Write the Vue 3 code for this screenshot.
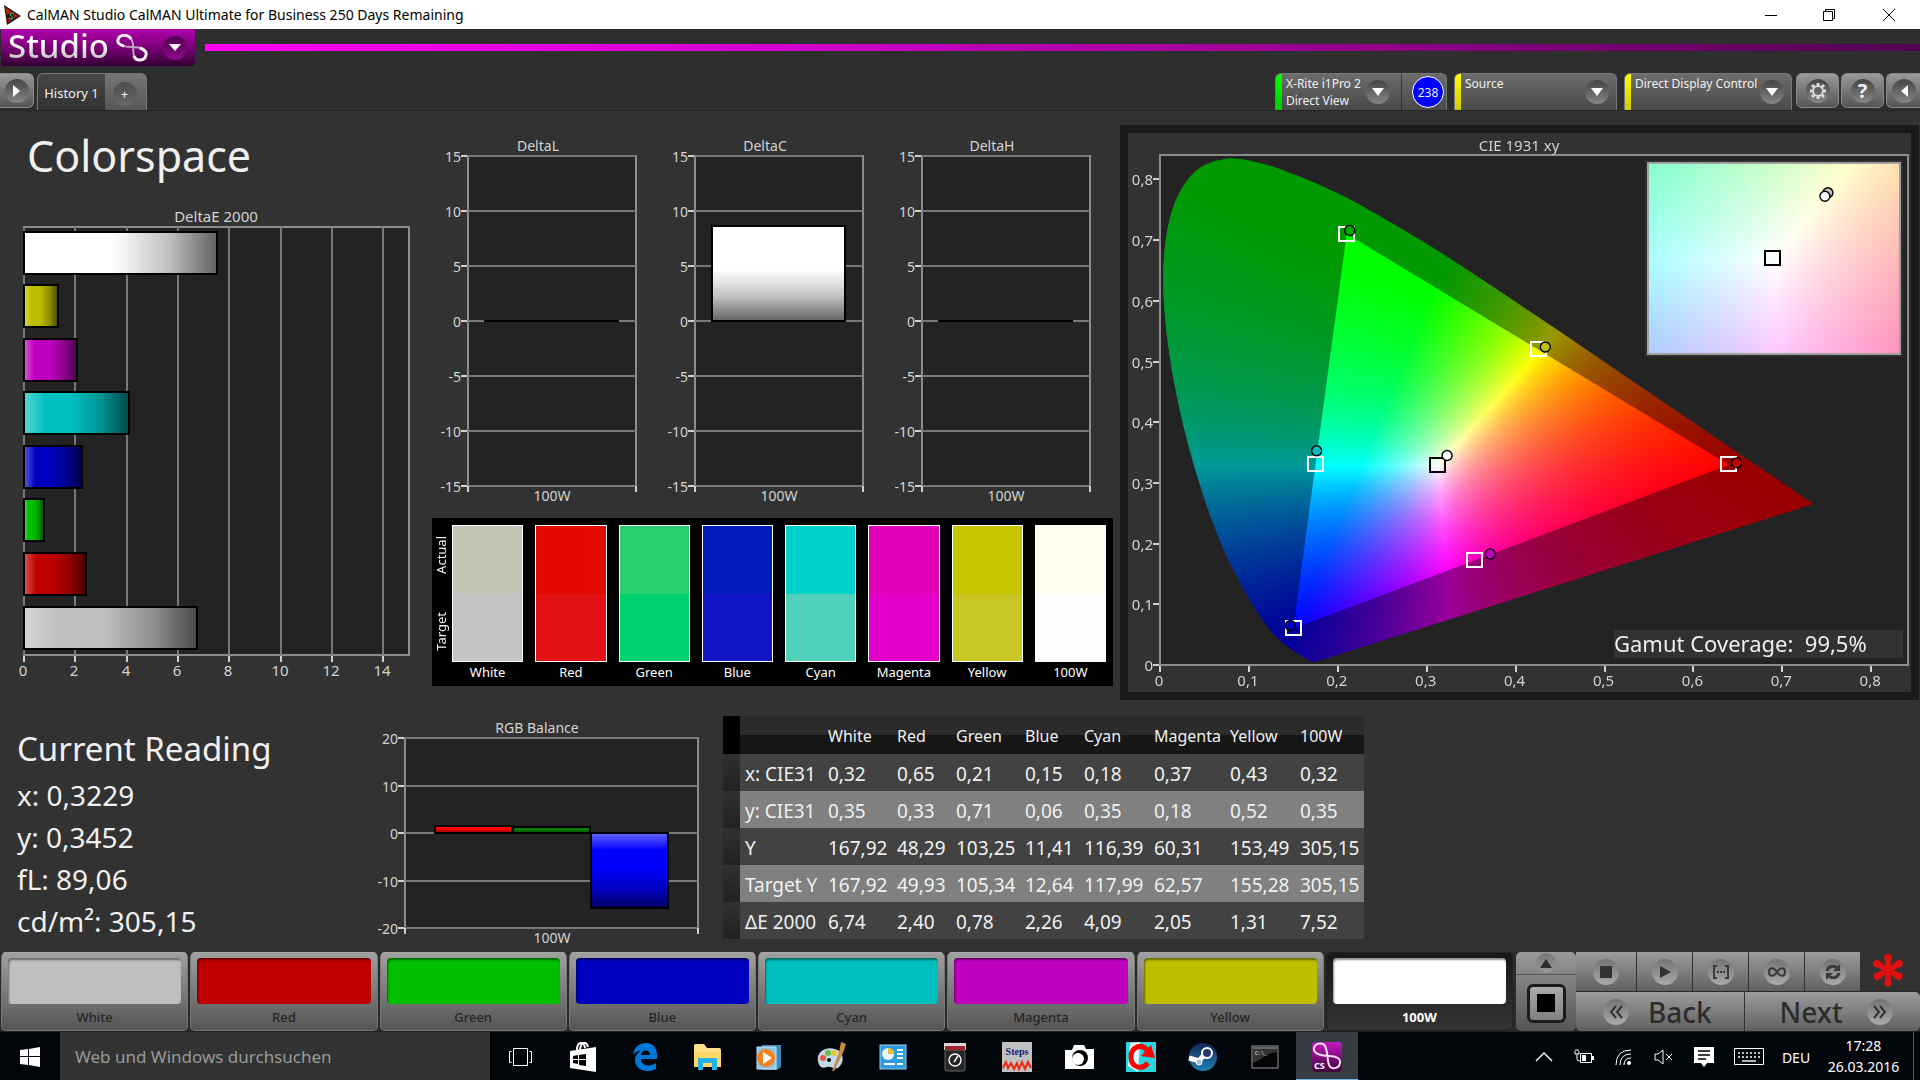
<script setup>
import { ref, onMounted } from 'vue'

/* ---------- measurement data ---------- */
const colors = [
  { name: 'White', css: '#bfbfbf', actual: '#c4c4b6', target: '#c4c4c4', de: 6.74 },
  { name: 'Red', css: '#bf0000', actual: '#e30b00', target: '#e31315', de: 2.4 },
  { name: 'Green', css: '#00bf00', actual: '#29d06d', target: '#00d26f', de: 0.78 },
  { name: 'Blue', css: '#0000bf', actual: '#001cbc', target: '#1313c8', de: 2.26 },
  { name: 'Cyan', css: '#00bfbf', actual: '#00d2cb', target: '#4fd1bb', de: 4.09 },
  { name: 'Magenta', css: '#bf00bf', actual: '#e300b9', target: '#e300c8', de: 2.05 },
  { name: 'Yellow', css: '#bfbf00', actual: '#c8c600', target: '#c8c624', de: 1.31 },
  { name: '100W', css: '#ffffff', actual: '#fffdee', target: '#fdfdfd', de: 7.52 }
]
const deltaEBars = [...colors].reverse()
const deltaETicks = [0, 2, 4, 6, 8, 10, 12, 14]
const deltaEX = (v) => Math.round(24 + (v * 385) / 15)
const deltaEY = (i) => Math.floor(31 + (i * 375) / 7)

const deltaCharts = [
  { title: 'DeltaL', value: 0 },
  { title: 'DeltaC', value: 8.6 },
  { title: 'DeltaH', value: 0 }
]
const deltaTicks = [15, 10, 5, 0, -5, -10, -15]
const deltaY = (v) => Math.round(191 - v * 11)

const balance = [
  { name: 'Red', value: 1.5, css: '#ff0000' },
  { name: 'Green', value: 1.3, css: '#008000' },
  { name: 'Blue', value: -15.7, css: '#0000ff' }
]
const balanceTicks = [20, 10, 0, -10, -20]
const balanceY = (v) => Math.round(121 - (v * 95) / 20)

const readings = ['x: 0,3229', 'y: 0,3452', 'fL: 89,06', 'cd/m²: 305,15']

const rows = [
  ['x: CIE31', '0,32', '0,65', '0,21', '0,15', '0,18', '0,37', '0,43', '0,32'],
  ['y: CIE31', '0,35', '0,33', '0,71', '0,06', '0,35', '0,18', '0,52', '0,35'],
  ['Y', '167,92', '48,29', '103,25', '11,41', '116,39', '60,31', '153,49', '305,15'],
  ['Target Y', '167,92', '49,93', '105,34', '12,64', '117,99', '62,57', '155,28', '305,15'],
  ['ΔE 2000', '6,74', '2,40', '0,78', '2,26', '4,09', '2,05', '1,31', '7,52']
]
const colWidths = [17, 83, 69, 59, 69, 59, 70, 76, 70, 69]

/* ---------- chromaticity chart ---------- */
const CIE_W = 783
const CIE_H = 559
const px = (x) => 32 + x * 889
const py = (y) => 532 - y * 607
const white = { x: 0.3127, y: 0.329 }
const inset = { x: 520, y: 30, w: 252, h: 191, span: 0.05 }
const ix = (x) => inset.x + inset.w / 2 + ((x - white.x) / inset.span) * inset.w
const iy = (y) => inset.y + inset.h / 2 - ((y - white.y) / inset.span) * inset.h
const cieTicks = [0, 0.1, 0.2, 0.3, 0.4, 0.5, 0.6, 0.7, 0.8]
const comma = (v) => String(v).replace('.', ',')

const targets = [
  { x: 0.21, y: 0.71 }, { x: 0.4263, y: 0.5205 }, { x: 0.1752, y: 0.331 },
  { x: 0.64, y: 0.331 }, { x: 0.354, y: 0.173 }, { x: 0.1505, y: 0.0605 }
]
const measured = [
  { x: 0.2135, y: 0.716, css: '#00a500' }, { x: 0.4334, y: 0.524, css: '#bfbf00' },
  { x: 0.1762, y: 0.353, css: '#00bfbf' }, { x: 0.6487, y: 0.333, css: '#bf0000' },
  { x: 0.3715, y: 0.183, css: '#bf00bf' }, { x: 0.1466, y: 0.065, css: '#0000bf' },
  { x: 0.3229, y: 0.3452, css: '#ffffff' }
]
const locus = [
  [0.1741, 0.005], [0.1714, 0.0051], [0.1644, 0.0109], [0.1566, 0.0177], [0.144, 0.0297],
  [0.1355, 0.0399], [0.1241, 0.0578], [0.1096, 0.0868], [0.0913, 0.1327], [0.0687, 0.2007],
  [0.0454, 0.295], [0.0235, 0.4127], [0.0082, 0.5384], [0.0039, 0.6548], [0.0139, 0.7502],
  [0.0389, 0.812], [0.0743, 0.8338], [0.1142, 0.8262], [0.1547, 0.8059], [0.1929, 0.7816],
  [0.2296, 0.7543], [0.3016, 0.6923], [0.3731, 0.6245], [0.4441, 0.5547], [0.5125, 0.4866],
  [0.5752, 0.4242], [0.627, 0.3725], [0.6658, 0.334], [0.6915, 0.3083], [0.719, 0.2809],
  [0.7347, 0.2653]
]
const gamut = [[0.21, 0.71], [0.64, 0.33], [0.15, 0.06]]
const cieCanvas = ref(null)

function toRgb(x, y) {
  const yy = Math.max(y, 0.0001)
  const X = x / yy
  const Z = (1 - x - yy) / yy
  const r = Math.max(0, 3.2406 * X - 1.5372 - 0.4986 * Z)
  const g = Math.max(0, -0.9689 * X + 1.8758 + 0.0415 * Z)
  const b = Math.max(0, 0.0557 * X - 0.204 + 1.057 * Z)
  const m = Math.max(r, g, b, 0.0001)
  return [(r / m) * 255, (g / m) * 255, (b / m) * 255]
}

function colourField(w, h, xAt, yAt) {
  const field = document.createElement('canvas')
  field.width = w
  field.height = h
  const ctx = field.getContext('2d')
  const img = ctx.createImageData(w, h)
  for (let j = 0; j < h; j++) {
    for (let i = 0; i < w; i++) {
      const c = toRgb(xAt(i), yAt(j))
      const o = (j * w + i) * 4
      img.data[o] = c[0]
      img.data[o + 1] = c[1]
      img.data[o + 2] = c[2]
      img.data[o + 3] = 255
    }
  }
  ctx.putImageData(img, 0, 0)
  return field
}

function locusPath(ctx) {
  const p = locus.map(([x, y]) => [px(x), py(y)])
  ctx.beginPath()
  ctx.moveTo(p[0][0], p[0][1])
  for (let i = 0; i < p.length - 1; i++) {
    const a = p[Math.max(0, i - 1)]
    const b = p[i]
    const c = p[i + 1]
    const d = p[Math.min(p.length - 1, i + 2)]
    ctx.bezierCurveTo(
      b[0] + (c[0] - a[0]) / 6, b[1] + (c[1] - a[1]) / 6,
      c[0] - (d[0] - b[0]) / 6, c[1] - (d[1] - b[1]) / 6, c[0], c[1]
    )
  }
  ctx.closePath()
}

onMounted(() => {
  const ctx = cieCanvas.value.getContext('2d')
  const field = colourField(CIE_W, CIE_H, (i) => (i - 32) / 889, (j) => (532 - j) / 607)
  ctx.save()
  locusPath(ctx)
  ctx.clip()
  ctx.drawImage(field, 0, 0)
  ctx.fillStyle = 'rgba(0,0,0,0.4)'
  ctx.fillRect(0, 0, CIE_W, CIE_H)
  ctx.restore()
  ctx.save()
  ctx.beginPath()
  gamut.forEach(([x, y], i) => (i ? ctx.lineTo(px(x), py(y)) : ctx.moveTo(px(x), py(y))))
  ctx.closePath()
  ctx.clip()
  ctx.drawImage(field, 0, 0)
  ctx.restore()
  const zoomed = colourField(
    inset.w, inset.h,
    (i) => white.x + (i / inset.w - 0.5) * inset.span,
    (j) => white.y + (0.5 - j / inset.h) * inset.span
  )
  ctx.drawImage(zoomed, inset.x, inset.y)
})
</script>

<template>
  <div class="desktop">
    <header class="titlebar">
      <svg width="17" height="20" viewBox="0 0 17 20" aria-hidden="true">
        <path d="M0 0L17 11L3 20Z" fill="#2a0d0a" /><path d="M1 2L8 7L3 10Z" fill="#b3261a" /><path d="M9 8L15 11L10 13Z" fill="#a3301f" />
        <path d="M3 12L8 15L4 18Z" fill="#8f1414" /><path d="M10 8Q5 8 6 10Q9 12 9 13Q7 15 5 13" stroke="#43d16a" fill="none" />
      </svg>
      <span class="title">CalMAN Studio CalMAN Ultimate for Business 250 Days Remaining</span>
      <button class="win" aria-label="Minimize"><svg width="12" height="12"><path d="M0 6.5H12" stroke="#000" /></svg></button>
      <button class="win" aria-label="Restore"><svg width="12" height="12" fill="none" stroke="#000"><path d="M.5 2.5H9.5V11.5H.5ZM2.5 2.5V.5H11.5V9.5H9.5" /></svg></button>
      <button class="win" aria-label="Close"><svg width="12" height="12"><path d="M0 0L12 12M12 0L0 12" stroke="#000" /></svg></button>
    </header>

    <div class="brandbar">
      <button class="brand" aria-label="Studio menu">
        <span class="brand-name">Studio</span>
        <svg width="32" height="28" viewBox="0 0 32 28" fill="none" aria-hidden="true">
          <path d="M15 5C12 0 3 0 2 6C1 11 8 13 16 13C24 13 31 15 30 21C29 27 20 28 18 22C16 17 19 10 15 5Z" stroke="#c9a3c9" stroke-width="2" />
          <path d="M15 5C12 0 3 0 2 6C1 9 4 11 8 12M24 14C29 16 31 18 30 21C29 27 20 28 18 22" stroke="#f4eef4" stroke-width="3" />
        </svg>
        <span class="knob purple"><svg width="12" height="7"><path d="M0 0H12L6 7Z" fill="#fff" /></svg></span>
      </button>
      <div class="beam"></div>
    </div>

    <div class="toolbar">
      <button class="sq first" aria-label="Expand"><span class="knob"><svg width="8" height="12"><path d="M0 0L7 6L0 12Z" fill="#fff" /></svg></span></button>
      <nav class="tabs">
        <button class="tab on">History 1</button>
        <button class="tab add" aria-label="Add history"><span class="plus">+</span></button>
      </nav>
      <div class="spacer"></div>
      <div class="device meter">
        <i class="strip green"></i>
        <button class="device-btn"><span>X-Rite i1Pro 2<br />Direct View</span><span class="knob"><svg width="12" height="8"><path d="M0 0H12L6 8Z" fill="#fff" /></svg></span></button>
        <button class="badge">238</button>
      </div>
      <div class="device source">
        <i class="strip"></i>
        <button class="device-btn"><span>Source</span><span class="knob"><svg width="12" height="8"><path d="M0 0H12L6 8Z" fill="#fff" /></svg></span></button>
      </div>
      <div class="device display">
        <i class="strip"></i>
        <button class="device-btn"><span>Direct Display Control</span><span class="knob"><svg width="12" height="8"><path d="M0 0H12L6 8Z" fill="#fff" /></svg></span></button>
      </div>
      <button class="sq" aria-label="Settings"><span class="knob"><svg width="18" height="18" viewBox="-9 -9 18 18" fill="none" stroke="#ddd"><circle r="5" stroke-width="2" /><path d="M0-6V-8M0 6V8M6 0H8M-6 0H-8M4-4L6-6M-4 4L-6 6M4 4L6 6M-4-4L-6-6" stroke-width="3" /></svg></span></button>
      <button class="sq" aria-label="Help"><span class="knob help">?</span></button>
      <button class="sq last" aria-label="Collapse"><span class="knob"><svg width="8" height="12"><path d="M8 0L1 6L8 12Z" fill="#fff" /></svg></span></button>
    </div>

    <main class="workspace">
      <section class="upper">
        <div class="col-a">
          <h1>Colorspace</h1>
          <svg class="chart wide" viewBox="0 0 430 480" role="img" aria-label="DeltaE 2000">
            <defs>
              <linearGradient id="shadeX"><stop offset="0" stop-color="#fff" stop-opacity=".35" /><stop offset=".2" stop-color="#fff" stop-opacity="0" /><stop offset=".46" stop-color="#000" stop-opacity="0" /><stop offset=".75" stop-color="#000" stop-opacity=".25" /><stop offset="1" stop-color="#000" stop-opacity=".62" /></linearGradient>
              <linearGradient id="shadeY" x2="0" y2="1"><stop offset="0" stop-color="#fff" stop-opacity=".4" /><stop offset=".23" stop-color="#fff" stop-opacity="0" /><stop offset=".46" stop-color="#000" stop-opacity="0" /><stop offset=".75" stop-color="#000" stop-opacity=".25" /><stop offset="1" stop-color="#000" stop-opacity=".62" /></linearGradient>
            </defs>
            <text x="216" y="21" text-anchor="middle">DeltaE 2000</text>
            <rect class="plot" x="24" y="26" width="385" height="428" />
            <g v-for="t in deltaETicks" :key="t">
              <line class="grid" :x1="deltaEX(t)" y1="26" :x2="deltaEX(t)" y2="454" />
              <line class="tick" :x1="deltaEX(t)" y1="455" :x2="deltaEX(t)" y2="461" />
              <text :x="deltaEX(t) - 1" y="475" text-anchor="middle">{{ t }}</text>
            </g>
            <g v-for="(b, i) in deltaEBars" :key="b.name" class="bar">
              <rect x="24" :y="deltaEY(i)" :width="deltaEX(b.de) - 24" height="42" :fill="b.css" />
              <rect x="24" :y="deltaEY(i)" :width="deltaEX(b.de) - 24" height="42" fill="url(#shadeX)" />
            </g>
          </svg>
        </div>

        <div class="col-b">
          <div class="deltas">
            <svg v-for="c in deltaCharts" :key="c.title" class="chart" viewBox="0 0 227 380" role="img" :aria-label="c.title">
              <text x="106" y="21" text-anchor="middle">{{ c.title }}</text>
              <rect class="plot" x="36" y="26" width="168" height="330" />
              <g v-for="t in deltaTicks" :key="t">
                <line class="grid" x1="36" :y1="deltaY(t)" x2="204" :y2="deltaY(t)" />
                <line class="tick" x1="29" :y1="deltaY(t)" x2="35" :y2="deltaY(t)" />
                <text x="29" :y="deltaY(t) + 6" text-anchor="end">{{ t }}</text>
              </g>
              <line class="tick" x1="36" y1="356" x2="36" y2="362" /><line class="tick" x1="204" y1="356" x2="204" y2="362" />
              <g v-if="c.value" class="bar">
                <rect x="53" :y="deltaY(c.value)" width="133" :height="deltaY(0) - deltaY(c.value)" fill="#fff" />
                <rect x="53" :y="deltaY(c.value)" width="133" :height="deltaY(0) - deltaY(c.value)" fill="url(#shadeY)" />
              </g>
              <rect v-else x="52" y="190" width="135" height="2" fill="#000" />
              <text x="120" y="371" text-anchor="middle">100W</text>
            </svg>
          </div>
          <div class="swatches">
            <div class="side"><span>Actual</span><span>Target</span></div>
            <figure v-for="c in colors" :key="c.name">
              <div class="pair"><div :style="{ background: c.actual }"></div><div :style="{ background: c.target }"></div></div>
              <figcaption>{{ c.name }}</figcaption>
            </figure>
          </div>
        </div>

        <div class="col-c">
          <div class="cie">
            <svg class="chart wide" viewBox="0 0 783 559" aria-hidden="true">
              <rect class="plot" x="32" y="22" width="748" height="510" />
              <rect x="517" y="27" width="258" height="197" fill="#2f2f2f" />
            </svg>
            <canvas ref="cieCanvas" :width="CIE_W" :height="CIE_H"></canvas>
            <svg class="chart wide" viewBox="0 0 783 559" role="img" aria-label="CIE 1931 xy chromaticity">
              <text x="391" y="18" text-anchor="middle">CIE 1931 xy</text>
              <g v-for="t in cieTicks" :key="t">
                <line class="tick" :x1="px(t)" y1="533" :x2="px(t)" y2="539" />
                <text :x="px(t) - 1" y="553" text-anchor="middle">{{ comma(t) }}</text>
                <line class="tick" x1="25" :y1="py(t)" x2="31" :y2="py(t)" />
                <text x="25" :y="py(t) + 6" text-anchor="end">{{ comma(t) }}</text>
              </g>
              <rect class="frame" :x="inset.x" :y="inset.y" :width="inset.w" :height="inset.h" />
              <rect v-for="t in targets" :key="t.x" class="target" :x="px(t.x) - 8" :y="py(t.y) - 7" width="15" height="14" />
              <rect class="target dark" :x="px(white.x) - 8" :y="py(white.y) - 7" width="15" height="14" />
              <circle v-for="m in measured" :key="m.css" class="point" :cx="px(m.x)" :cy="py(m.y)" r="5" :fill="m.css" />
              <rect class="target dark" :x="ix(white.x) - 9" :y="iy(white.y) - 8" width="15" height="14" />
              <circle class="point" :cx="ix(0.3234)" :cy="iy(0.3462)" r="5" fill="#bfbfbf" />
              <circle class="point" :cx="ix(0.3228)" :cy="iy(0.3453)" r="5" fill="#fff" />
              <rect x="486" y="497" width="289" height="28" fill="#323232" />
              <text class="coverage" x="486" y="519">Gamut Coverage:&nbsp; 99,5%</text>
            </svg>
          </div>
        </div>
      </section>

      <section class="lower">
        <div class="reading">
          <h2>Current Reading</h2>
          <p v-for="r in readings" :key="r">{{ r }}</p>
        </div>
        <svg class="chart rgb" viewBox="0 0 353 240" role="img" aria-label="RGB Balance">
          <text x="167" y="21" text-anchor="middle">RGB Balance</text>
          <rect class="plot" x="35" y="26" width="293" height="190" />
          <g v-for="t in balanceTicks" :key="t">
            <line class="grid" x1="35" :y1="balanceY(t)" x2="328" :y2="balanceY(t)" />
            <line class="tick" x1="28" :y1="balanceY(t)" x2="34" :y2="balanceY(t)" />
            <text x="28" :y="balanceY(t) + 6" text-anchor="end">{{ t }}</text>
          </g>
          <line class="tick" x1="35" y1="216" x2="35" y2="222" /><line class="tick" x1="328" y1="216" x2="328" y2="222" />
          <g v-for="(b, i) in balance" :key="b.name" class="bar">
            <rect :x="65 + i * 78" :y="Math.min(balanceY(0), balanceY(b.value))" width="77" :height="Math.abs(balanceY(0) - balanceY(b.value))" :fill="b.css" />
            <rect :x="65 + i * 78" :y="Math.min(balanceY(0), balanceY(b.value))" width="77" :height="Math.abs(balanceY(0) - balanceY(b.value))" fill="url(#shadeY)" />
          </g>
          <text x="182" y="231" text-anchor="middle">100W</text>
        </svg>
        <table class="data">
          <colgroup><col v-for="(w, i) in colWidths" :key="i" :style="{ width: w + 'px' }" /></colgroup>
          <thead>
            <tr><th class="sel"></th><th></th><th v-for="c in colors" :key="c.name" scope="col">{{ c.name }}</th></tr>
          </thead>
          <tbody>
            <tr v-for="r in rows" :key="r[0]">
              <td class="sel"></td><th scope="row">{{ r[0] }}</th>
              <td v-for="(v, i) in r.slice(1)" :key="i">{{ v }}</td>
            </tr>
          </tbody>
        </table>
      </section>
    </main>

    <section class="patterns">
      <div class="pattern-list">
        <button v-for="c in colors" :key="c.name" class="pattern" :class="{ active: c.name === '100W' }">
          <span class="chip" :style="{ background: c.css }"></span>
          <span class="pattern-name">{{ c.name }}</span>
        </button>
      </div>
      <div class="window-col">
        <button class="up" aria-label="More"><span><svg width="12" height="9"><path d="M0 9H12L6 0Z" fill="#2d2d2d" /></svg></span></button>
        <button class="pattern-window" aria-label="Pattern window"><i></i></button>
      </div>
      <div class="transport">
        <div class="transport-row">
          <button class="stop" aria-label="Stop"><span class="disc"><svg width="12" height="12"><rect width="12" height="12" fill="#333" /></svg></span></button>
          <button aria-label="Read"><span class="disc"><svg width="12" height="12"><path d="M1 0L12 6L1 12Z" fill="#333" /></svg></span></button>
          <button aria-label="Read series"><span class="disc"><svg width="18" height="14" fill="none" stroke="#3a3a3a" stroke-width="2"><path d="M5 1H2V13H5M13 1H16V13H13M5 7H7M8 7H10M11 7H13" /></svg></span></button>
          <button aria-label="Read continuous"><span class="disc"><svg width="20" height="12" fill="none" stroke="#3a3a3a" stroke-width="2"><path d="M10 6C7 1 2 1 2 6S7 11 10 6S18 1 18 6S13 11 10 6Z" /></svg></span></button>
          <button aria-label="Refresh"><span class="disc"><svg width="16" height="16" fill="none" stroke="#3a3a3a" stroke-width="3"><path d="M2 7C3 2 9 1 12 4M14 9C13 14 7 15 4 12" /><path d="M15 0V7H8ZM1 16V9H8Z" fill="#3a3a3a" stroke="none" /></svg></span></button>
          <svg class="star" viewBox="-18 -19 36 38" aria-hidden="true"><g fill="#e01010"><path v-for="a in [0, 60, 120, 180, 240, 300]" :key="a" d="M-2 0L-4-15Q0-20 4-15L2 0Z" :transform="`rotate(${a})`" /></g></svg>
        </div>
        <div class="transport-row">
          <button class="nav"><span class="disc"><svg width="14" height="14" fill="none" stroke="#333" stroke-width="2"><path d="M7 1L2 7L7 13M13 1L8 7L13 13" /></svg></span>Back</button>
          <button class="nav next">Next<span class="disc"><svg width="14" height="14" fill="none" stroke="#333" stroke-width="2"><path d="M1 1L6 7L1 13M7 1L12 7L7 13" /></svg></span></button>
        </div>
      </div>
    </section>

    <footer class="taskbar">
      <button class="start" aria-label="Start"><svg width="20" height="20" fill="#fff"><path d="M0 3L8 2V9H0ZM9 2L20 0V9H9ZM0 10H8V18L0 17ZM9 10H20V20L9 18Z" /></svg></button>
      <input class="search" type="text" aria-label="Suche" placeholder="Web und Windows durchsuchen" />
      <div class="apps">
        <button aria-label="Task View"><svg width="26" height="20" fill="none" stroke="#fff"><path d="M5.5 1.5H19.5V18.5H5.5ZM3.5 4.5H1.500V15.5H3.5M21.5 4.5H23.5V15.5H21.5" /></svg></button>
        <button aria-label="Store"><svg width="28" height="30"><path d="M1 9L27 5V30L1 26Z" fill="#fff" /><path d="M8 8C8-1 15-1 16 6M11 8C12-1 18-1 19 5" fill="none" stroke="#fff" stroke-width="2" /><path d="M4 14L9 13V17H4ZM10 13L17 12V17H10ZM4 18H9V22L4 21ZM10 18H17V24L10 23Z" fill="#000" /></svg></button>
        <button aria-label="Edge"><svg width="26" height="28"><path d="M1 12C2 4 7 0 14 0C22 0 26 6 25 16H9C9 23 18 24 24 20V26C15 31 3 27 3 17C3 12 6 9 10 7C6 8 3 9 1 12ZM9 12H18C18 6 10 6 9 12Z" fill="#0078d7" fill-rule="evenodd" /></svg></button>
        <button aria-label="Explorer"><svg width="28" height="26"><path d="M1 2Q1 0 3 0H11L14 4H26Q28 4 28 6V22H1Z" fill="#fce08a" /><path d="M1 8H28V23H1Z" fill="#ffd868" /><path d="M5 14H24V26H19V19H10V26H5Z" fill="#22b4ea" /></svg></button>
        <button aria-label="Media Player"><svg width="26" height="26"><path d="M6 1H25V23L21 26H6Z" fill="#3d89b8" /><path d="M1 3H20V25H1Z" fill="#8dc4e8" stroke="#c9e6f6" /><circle cx="10" cy="14" r="9" fill="#f58220" /><path d="M7 8L16 14L7 20Z" fill="#fff" /></svg></button>
        <button aria-label="Paint"><svg width="30" height="30"><path d="M2 19C0 10 10 4 19 7C27 9 29 18 24 24C19 30 16 23 11 25C5 27 3 24 2 19Z" fill="#bfdbe9" /><circle cx="7" cy="16" r="3" fill="#e35640" /><circle cx="12" cy="11" r="3" fill="#6bbf4a" /><circle cx="18" cy="11" r="3" fill="#e9c93a" /><circle cx="13" cy="18" r="2" fill="#0a0d12" /><path d="M23 10L25 0L30 2L27 11L18 29L16 29Z" fill="#c98b42" /></svg></button>
        <button aria-label="Control Panel"><svg width="28" height="26"><rect x="1" y="1" width="26" height="24" fill="#2e9bdc" stroke="#8fd1f5" /><circle cx="9" cy="10" r="6" fill="#e7f6ff" /><path d="M9 10V4A6 6 0 0 1 15 10Z" fill="#f3b72b" /><path d="M18 6H24M18 10H24M18 14H24M5 20H16M18 20H24" stroke="#fff" stroke-width="2" /></svg></button>
        <button aria-label="Battery Gauge"><svg width="24" height="30"><rect x="2" y="8" width="20" height="21" rx="2" fill="#262626" stroke="#666" /><path d="M1 1H23V8H1Z" fill="#d8d8d8" /><path d="M2 4H22V8H2Z" fill="#a02626" /><circle cx="12" cy="18" r="6" fill="none" stroke="#fff" stroke-width="1.4" /><path d="M11 20L15 14" stroke="#fff" stroke-width="1.4" /></svg></button>
        <button aria-label="Steps"><svg width="30" height="30"><rect width="30" height="30" fill="#c0c0c0" /><text x="15" y="13" text-anchor="middle" class="steps-text">Steps</text><path d="M1 26L4 20L6 26L9 21L12 27L15 21L17 27L20 20L23 27L26 20L29 26" fill="none" stroke="#f22a10" stroke-width="2" /></svg></button>
        <button aria-label="Camera"><svg width="30" height="24"><path d="M1 5H8L10 0H20L22 4H30V24H1Z" fill="#fff" /><circle cx="16" cy="13" r="8" /><circle cx="14" cy="14" r="6" fill="#fff" /></svg></button>
        <button aria-label="Capture"><svg width="30" height="30"><rect width="30" height="30" fill="#28d6df" /><path d="M4 1L14 0L12 30L2 24Z" fill="#e9ffff" /><path d="M21 8C15 1 5 5 5 15S15 29 22 21" fill="none" stroke="#f00" stroke-width="5" /><path d="M15 14L29 16L25 3Z" fill="#f00" /></svg></button>
        <button aria-label="Steam"><svg width="30" height="30"><defs><linearGradient id="steam" x2="0" y2="1"><stop offset="0" stop-color="#152757" /><stop offset="1" stop-color="#1e80b5" /></linearGradient></defs><circle cx="15" cy="15" r="14" fill="url(#steam)" /><path d="M1 16L11 19L17 12" stroke="#fff" stroke-width="5" fill="none" /><circle cx="19" cy="11" r="5" fill="#253b68" stroke="#fff" stroke-width="2" /><circle cx="11" cy="20" r="3" fill="#a9bfd3" stroke="#fff" /></svg></button>
        <button aria-label="Command Prompt"><svg width="28" height="24"><rect x="1" y="1" width="26" height="22" fill="#050505" stroke="#9a9a9a" /><path d="M2 3H26" stroke="#c9c9c9" /><path d="M2 4H26V7Q14 9 10 14L2 18Z" fill="#343434" /><text x="4" y="10" class="cmd-text">C:\_</text></svg></button>
        <button class="running" aria-label="CalMAN Studio"><svg width="30" height="30"><defs><linearGradient id="cs" x2="0" y2="1"><stop offset="0" stop-color="#c51ac0" /><stop offset="1" stop-color="#3b0339" /></linearGradient></defs><rect width="30" height="30" rx="4" fill="url(#cs)" /><path d="M13 4C11 0 3 1 2 6C1 12 10 14 17 14C25 14 29 17 28 21C27 27 19 28 17 23C15 17 16 10 13 4Z" fill="none" stroke="#f2def1" stroke-width="2" /><text x="2" y="27" class="cs-text">CS</text></svg></button>
      </div>
      <div class="tray">
        <button aria-label="Hidden icons"><svg width="18" height="10" fill="none" stroke="#fff" stroke-width="1.4"><path d="M1 9L9 1L17 9" /></svg></button>
        <button aria-label="Power"><svg width="20" height="16" fill="none" stroke="#fff"><path d="M6.5 4.5H17.5V13.5H6.5Z" /><path d="M19 7V11" stroke-width="2" /><path d="M1 2V5H5V2M2 0V2M4 0V2M3 5V10Q3 12 6 12" /><rect x="8" y="6" width="4" height="6" fill="#fff" stroke="none" /></svg></button>
        <button aria-label="Network"><svg width="18" height="16" fill="none" stroke="#fff"><path d="M1 16Q1 1 16 1M5 16Q5 5 16 5M9 16Q9 9 16 9" /><circle cx="14" cy="14" r="2" fill="#fff" stroke="none" /></svg></button>
        <button aria-label="Volume"><svg width="20" height="16" fill="none" stroke="#fff"><path d="M1 5H4L9 1V15L4 11H1Z M12 5L18 11M18 5L12 11" /></svg></button>
        <button aria-label="Notifications"><svg width="20" height="20"><path d="M0 0H20V16H13L10 20L7 16H0Z" fill="#fff" /><path d="M4 4H16M4 8H16M4 12H12" stroke="#000" stroke-width="1.4" /></svg></button>
        <button class="kbd" aria-label="Touch keyboard"><svg width="30" height="18" fill="none" stroke="#fff"><path d="M.5 .5H29.5V16.5H.5Z" /><path d="M4 5H27M4 9H27" stroke-dasharray="2 2" stroke-width="1.4" /><path d="M8 13H22" stroke-width="1.4" /></svg></button>
        <button class="lang">DEU</button>
        <button class="clock">17:28<br />26.03.2016</button>
      </div>
    </footer>
  </div>
</template>

<style>
body { margin: 0; background: #323232; }
</style>

<style scoped>
* { box-sizing: border-box; }
.desktop { min-height: 100vh; display: flex; flex-direction: column; background: #323232; color: #f0f0f0; font-family: "Noto Sans", "Open Sans", sans-serif; }
button { font: inherit; color: inherit; border: 0; padding: 0; margin: 0; background: none; }
svg { display: block; }

.titlebar { height: 29px; display: flex; align-items: center; background: #fff; color: #000; padding-left: 4px; }
.title { flex: 1; padding-left: 6px; font-size: 14px; line-height: 29px; white-space: nowrap; }
.win { width: 58px; height: 29px; display: grid; place-items: center; }
.win:last-child { width: 62px; }

.brandbar { height: 37px; display: flex; align-items: flex-start; background: #2e2e2e; }
.brand { margin-left: 1px; width: 194px; height: 37px; display: flex; align-items: center; padding-left: 7px; border-radius: 0 0 4px 4px; background: linear-gradient(#b100ae, #7a0078 50%, #320032); }
.brand-name { font-size: 33px; line-height: 34px; height: 37px; width: 108px; text-align: left; font-weight: 500; background: linear-gradient(#fff 40%, #c8c0c8 80%); background-clip: text; -webkit-background-clip: text; color: transparent; }
.knob { width: 24px; height: 24px; border-radius: 50%; display: grid; place-items: center; flex: none; background: linear-gradient(#444, #868686); }
.knob.purple { margin-left: 15px; background: linear-gradient(#50004f, #8d088b); }
.beam { flex: 1; height: 7px; margin: 15px 0 0 10px; background: linear-gradient(90deg, #ff00fb, #d800d4 30%, #97008f 65%, #520052); }

.toolbar { height: 45px; display: flex; align-items: flex-start; padding-top: 7px; background: #2e2e2e; border-bottom: 1px solid #252525; }
.sq { width: 43px; height: 35px; margin-right: 2px; display: grid; place-items: center; border: 1px solid #888; border-radius: 6px; background: linear-gradient(#999, #555); }
.sq.first { width: 34px; margin-right: 3px; border-left: 0; border-radius: 0 6px 6px 0; }
.sq.last { width: 34px; margin-right: 0; border-right: 0; border-radius: 6px 0 0 6px; }
.help { font-size: 20px; line-height: 24px; font-weight: 700; }
.tabs { display: flex; }
.tab { height: 37px; font-size: 13px; border: 1px solid #777; border-bottom: 0; background: linear-gradient(#464646, #323232); }
.tab.on { width: 68px; border-radius: 6px 0 0 0; border-right: 0; padding-top: 2px; }
.tab.add { width: 42px; border-radius: 0 6px 0 0; border-left: 0; display: grid; place-items: center; padding: 4px 2px 0 0; background: linear-gradient(#757575, #565656); }
.plus { width: 24px; height: 24px; border-radius: 50%; background: linear-gradient(#4c4c4c, #696969); line-height: 24px; }
.spacer { flex: 1; }
.device { height: 37px; display: flex; border: 1px solid #777; border-bottom: 0; border-radius: 6px 6px 0 0; overflow: hidden; background: linear-gradient(#6c6c6c, #4a4a4a); margin-right: 7px; }
.meter { width: 172px; }
.source { width: 163px; }
.display { width: 168px; margin-right: 4px; }
.strip { width: 6px; background: linear-gradient(#ff0, #cc0); flex: none; }
.strip.green { background: linear-gradient(#0f0, #0c0); }
.device-btn { flex: 1; display: flex; justify-content: space-between; align-items: flex-start; text-align: left; font-size: 12px; line-height: 17px; padding: 1px 7px 0 4px; white-space: nowrap; }
.device-btn .knob { margin-top: 5px; }
.meter .device-btn { border-right: 1px solid #333; padding-right: 11px; }
.badge { width: 32px; height: 32px; margin: 2px 2px 0 10px; border-radius: 50%; border: 1px solid #fff; background: #00f; font-size: 12px; flex: none; }

.upper { display: grid; grid-template-columns: minmax(0, 432fr) minmax(0, 688fr) minmax(0, 800fr); }
.col-a { padding: 17px 2px 0 0; }
h1 { margin: 0 0 17px 27px; font-size: 43px; line-height: 56px; font-weight: 400; }
.chart { width: 100%; height: auto; font-size: 14px; overflow: visible; }
.chart.wide { font-size: 15px; }
.chart text { fill: #d2d2d2; }
.plot { fill: #232323; stroke: #8c8c8c; stroke-width: 2; shape-rendering: crispEdges; }
.grid { stroke: #787878; stroke-width: 2; shape-rendering: crispEdges; }
.tick { stroke: #d0d0d0; stroke-width: 2; shape-rendering: crispEdges; }
.bar rect { stroke: #000; stroke-width: 2; shape-rendering: crispEdges; }
.col-b { padding: 19px 7px 0 0; }
.deltas { display: grid; grid-template-columns: repeat(3, 1fr); }
.swatches { margin-top: 8px; height: 168px; background: #000; display: grid; grid-template-columns: 8px repeat(8, minmax(0, 1fr)); column-gap: 12px; padding: 7px 7px 0 0; }
.side { display: flex; height: 137px; flex-direction: column; justify-content: space-between; align-items: center; padding: 11px 0; font-size: 13px; line-height: 18px; width: 18px; }
.side span { writing-mode: vertical-rl; transform: rotate(180deg); }
figure { margin: 0; text-align: center; }
.pair { height: 137px; border: 1px solid #fff; display: grid; grid-template-rows: 1fr 1fr; }
figcaption { font-size: 13px; line-height: 20px; color: #fff; }
.col-c { padding: 14px 1px 0 0; }
.cie { display: grid; border: 8px solid #1a1a1a; background: #323232; }
.cie > * { grid-area: 1 / 1; width: 100%; }
.frame { fill: none; stroke: #a0a0a0; stroke-width: 2; }
.target { fill: none; stroke: #fff; stroke-width: 2; shape-rendering: crispEdges; }
.target.dark { stroke: #000; }
.point { stroke: #000; stroke-width: 1.4; }
.chart .coverage { font-size: 22px; fill: #eee; }

.lower { display: grid; grid-template-columns: minmax(0, 370fr) minmax(0, 353fr) minmax(0, 641fr) minmax(0, 556fr); align-items: start; }
.reading { padding: 28px 0 10px 17px; }
h2 { margin: 0 0 4px; font-size: 33px; line-height: 42px; font-weight: 400; white-space: nowrap; }
.reading p { margin: 0; font-size: 28px; line-height: 42px; }
.rgb { margin-top: 12px; }
.data { margin-top: 16px; width: 100%; table-layout: fixed; border-collapse: collapse; font-size: 19px; white-space: nowrap; }
.data th, .data td { height: 37px; padding: 2px 0 0 5px; text-align: left; font-weight: 400; line-height: 24px; }
.data thead th { height: 38px; font-size: 16px; }
.data thead tr { background: linear-gradient(#2b2b2b 50%, #161616 50%); }
.data thead .sel { background: #000; }
.data tbody tr { background: #424242; }
.data tbody tr:nth-child(even) { background: #808080; }
.data tbody .sel { background: linear-gradient(#303030, #222); }

.patterns { flex: 1; display: grid; grid-template-columns: minmax(0, 1515fr) minmax(0, 61fr) minmax(0, 344fr); height: 78px; border-bottom: 1px solid #222; background: #2a2a2a; }
.pattern-list { display: grid; grid-template-columns: repeat(8, minmax(0, 1fr)); column-gap: 2px; padding: 0 2px 0 1px; }
.pattern { display: flex; flex-direction: column; padding: 5px 6px 0; border-radius: 5px; background: linear-gradient(#a0a0a0, #555); border: 1px solid #777; border-top-color: #aaa; color: #262626; font-size: 13px; font-weight: 500; }
.chip { display: block; width: 100%; height: 46px; border-radius: 4px; box-shadow: inset 1px 2px 2px rgba(0, 0, 0, .45); }
.pattern-name { width: 100%; text-align: center; line-height: 26px; }
.pattern.active { background: linear-gradient(#181818, #333); border-color: #222; color: #fff; font-weight: 700; }
.window-col { display: flex; flex-direction: column; padding-left: 1px; }
.up { height: 23px; display: grid; place-items: center; border-radius: 5px 5px 0 0; background: linear-gradient(#999, #858585); border-bottom: 1px solid #555; }
.up span { width: 20px; height: 20px; display: grid; place-items: center; border-radius: 50%; background: linear-gradient(#777, #999); }
.pattern-window { flex: 1; display: grid; place-items: center; border-radius: 0 0 5px 5px; background: linear-gradient(#858585, #555); }
.pattern-window i { width: 39px; height: 39px; border: 3px solid #1c1c1c; border-radius: 6px; background: linear-gradient(#000, #000) center / 18px 18px no-repeat, linear-gradient(#aaa, #808080); }
.transport { display: flex; flex-direction: column; gap: 1px; }
.transport-row { flex: 1; display: flex; gap: 1px; background: #323232; }
.transport-row button { flex: 1; display: grid; place-items: center; background: linear-gradient(#9c9c9c, #606060); }
.transport-row .stop { flex: none; width: 60px; }
.disc { width: 26px; height: 26px; border-radius: 50%; display: grid; place-items: center; background: linear-gradient(#737373, #aaa); flex: none; }
.star { width: 36px; height: 36px; margin: 0 14px 0 9px; }
.transport-row .nav { display: flex; align-items: center; justify-content: flex-start; padding-left: 27px; gap: 19px; color: #2c2c2c; font-size: 28px; line-height: 34px; font-weight: 500; border-radius: 0 0 0 5px; }
.transport-row .next { padding-left: 35px; gap: 24px; border-radius: 0 5px 5px 0; }

.taskbar { height: 50px; display: flex; background: #02050a; color: #fff; }
.start { width: 60px; display: grid; place-items: center; }
.search { width: 430px; border: 0; outline: 0; padding: 0 15px 2px; background: #333; font: 17px "Noto Sans", "Open Sans", sans-serif; color: #ddd; }
.search::placeholder { color: #999; opacity: 1; }
.apps { display: flex; flex: 1; }
.apps button { width: 62px; display: grid; place-items: center; }
.apps .running { background: #373c42; border-bottom: 3px solid #76b9ed; padding-top: 3px; }
.steps-text { font: 700 10px "Liberation Serif", serif; fill: #18187a; }
.cmd-text { font: 5px "Liberation Mono", monospace; fill: #fff; }
.cs-text { font: 700 9px "Noto Sans", sans-serif; fill: #fff; }
.tray { display: flex; align-items: center; padding-right: 4px; border-right: 1px solid #555; margin-right: 6px; }
.tray button { width: 40px; height: 50px; display: grid; place-items: center; }
.tray .kbd { width: 50px; }
.tray .lang { width: 44px; font-size: 14px; }
.tray .clock { width: 91px; display: block; font-size: 14px; line-height: 21px; padding-bottom: 2px; }
</style>
